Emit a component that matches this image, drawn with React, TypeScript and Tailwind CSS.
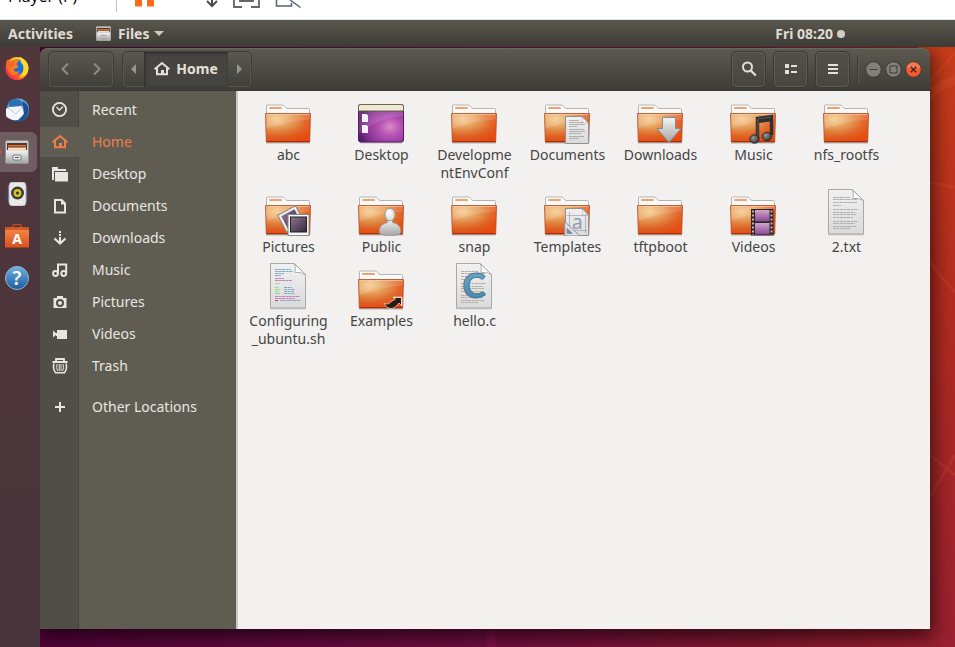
import { useState, type ReactNode } from 'react';

type Kind =
    | 'folder'
    | 'desktop'
    | 'documents'
    | 'downloads'
    | 'music'
    | 'pictures'
    | 'public'
    | 'templates'
    | 'videos'
    | 'link'
    | 'text'
    | 'script'
    | 'csource';

interface FileItem {
    name: string;
    kind: Kind;
}

// a line break marks where a long name wraps
const files: FileItem[] = [
    { name: 'abc', kind: 'folder' },
    { name: 'Desktop', kind: 'desktop' },
    { name: 'Developme\nntEnvConf', kind: 'folder' },
    { name: 'Documents', kind: 'documents' },
    { name: 'Downloads', kind: 'downloads' },
    { name: 'Music', kind: 'music' },
    { name: 'nfs_rootfs', kind: 'folder' },
    { name: 'Pictures', kind: 'pictures' },
    { name: 'Public', kind: 'public' },
    { name: 'snap', kind: 'folder' },
    { name: 'Templates', kind: 'templates' },
    { name: 'tftpboot', kind: 'folder' },
    { name: 'Videos', kind: 'videos' },
    { name: '2.txt', kind: 'text' },
    { name: 'Configuring\n_ubuntu.sh', kind: 'script' },
    { name: 'Examples', kind: 'link' },
    { name: 'hello.c', kind: 'csource' },
];

const places: { name: string; icon: ReactNode }[] = [
    {
        name: 'Recent',
        icon: (
            <g fill="none" stroke="currentColor">
                <circle cx="7.500" cy="7.500" r="6.600" strokeWidth="1.800" />
                <path d="M4.500 5l3 3L11 4.500" strokeWidth="1.300" />
            </g>
        ),
    },
    {
        name: 'Home',
        icon: (
            <>
                <path
                    d="M.6 8.200L8 2l7.400 6.200M3 7v6.200h10V7"
                    fill="none"
                    stroke="currentColor"
                    strokeWidth="2"
                />
                <path d="M7 9h3v5H7z" fill="currentColor" />
            </>
        ),
    },
    {
        name: 'Desktop',
        icon: (
            <path
                d="M0 1h6v2h8v2H2v9H0zM3 6h13v9.500H3z"
                fill="currentColor"
            />
        ),
    },
    {
        name: 'Documents',
        icon: (
            <path
                d="M2 1h8l4 4v10.500H2zM4 3v10.500h8V6.500H9V3z"
                fill="currentColor"
                fillRule="evenodd"
            />
        ),
    },
    {
        name: 'Downloads',
        icon: (
            <>
                <path d="M7 1h2v2H7zM7 4h2v2H7zM7 7h2v6H7z" fill="currentColor" />
                <path
                    d="M2.500 8.500L8 13.500l5.500-5"
                    fill="none"
                    stroke="currentColor"
                    strokeWidth="2.200"
                />
            </>
        ),
    },
    {
        name: 'Music',
        icon: (
            <g fill="none" stroke="currentColor" strokeWidth="2">
                <circle cx="3.500" cy="11.500" r="2.400" />
                <circle cx="11.700" cy="11.500" r="2.400" />
                <path d="M6 11.500V2.500h8.200v9" />
            </g>
        ),
    },
    {
        name: 'Pictures',
        icon: (
            <path
                d="M5 2h6v2h3.500v10h-13V4H5zM8 5a4 4 0 100 8 4 4 0 000-8zM8 7a2 2 0 110 4 2 2 0 010-4z"
                fill="currentColor"
                fillRule="evenodd"
            />
        ),
    },
    {
        name: 'Videos',
        icon: (
            <path
                d="M1 4.500l4 3.500-4 3.500zM5 4h10v9H5zM4 7h2v3H4z"
                fill="currentColor"
            />
        ),
    },
    {
        name: 'Trash',
        icon: (
            <g fill="none" stroke="currentColor">
                <path d="M.5 4h15M4 3V1h8v2" strokeWidth="1.800" />
                <path
                    d="M2 5.500Q.5 11 3.500 14.800h9Q15.500 11 14 5.500"
                    strokeWidth="1.600"
                />
                <path d="M5 6q-.8 4 .5 7M7.200 6v7M9 6v7M11.200 6q.8 4-.5 7" />
            </g>
        ),
    },
    {
        name: 'Other Locations',
        icon: (
            <path
                d="M8 3v10M3 8h10"
                fill="none"
                stroke="currentColor"
                strokeWidth="2"
            />
        ),
    },
];

const Gradients = () => (
    <svg width="0" height="0" className="absolute" aria-hidden="true">
        <defs>
            <radialGradient id="folderFill" cx=".25" cy=".2" r=".88">
                <stop offset="0" stopColor="#f5cc90" />
                <stop offset=".4" stopColor="#e69a56" />
                <stop offset=".75" stopColor="#e2672a" />
                <stop offset="1" stopColor="#f04c12" />
            </radialGradient>
            <linearGradient id="folderLow" x2="0" y2="1">
                <stop offset=".4" stopColor="#c85a14" stopOpacity="0" />
                <stop offset="1" stopColor="#dc440c" stopOpacity=".5" />
            </linearGradient>
            <linearGradient id="paper" x2="0" y2="1">
                <stop offset="0" stopColor="#f1f1f1" />
                <stop offset="1" stopColor="#dadada" />
            </linearGradient>
            <linearGradient id="metal" x2="0" y2="1">
                <stop offset="0" stopColor="#f4f4f4" />
                <stop offset="1" stopColor="#a4a4a4" />
            </linearGradient>
            <radialGradient id="deskFill" cx=".7" cy=".6" r=".7">
                <stop offset="0" stopColor="#d98ac8" />
                <stop offset=".35" stopColor="#b650b4" />
                <stop offset=".75" stopColor="#8a3496" />
                <stop offset="1" stopColor="#57206e" />
            </radialGradient>
            <linearGradient id="photo" x2="1" y2="1">
                <stop offset="0" stopColor="#8d7590" />
                <stop offset="1" stopColor="#352b3c" />
            </linearGradient>
            <linearGradient id="film" x2="0" y2="1">
                <stop offset="0" stopColor="#cfa6cf" />
                <stop offset="1" stopColor="#8a4690" />
            </linearGradient>
            <linearGradient id="cBlue" x2="0" y2="1">
                <stop offset="0" stopColor="#76aecb" />
                <stop offset="1" stopColor="#4580a5" />
            </linearGradient>
            <radialGradient id="note" cx=".35" cy=".35" r=".7">
                <stop offset="0" stopColor="#9a9a9a" />
                <stop offset="1" stopColor="#333" />
            </radialGradient>
            <linearGradient id="foxRing" x1="1" x2="0" y2="1">
                <stop offset="0" stopColor="#fff14a" />
                <stop offset=".4" stopColor="#ffb01c" />
                <stop offset=".7" stopColor="#ff4a2c" />
                <stop offset="1" stopColor="#e4127a" />
            </linearGradient>
            <linearGradient id="blueBall" x2="0" y2="1">
                <stop offset="0" stopColor="#6fb0e0" />
                <stop offset="1" stopColor="#1d5a9c" />
            </linearGradient>
            <linearGradient id="bag" x2="0" y2="1">
                <stop offset="0" stopColor="#f58a4a" />
                <stop offset="1" stopColor="#dc4f1c" />
            </linearGradient>
        </defs>
    </svg>
);

const Folder = () => (
    <>
        <path d="M2 46.800h44" stroke="#000" strokeOpacity=".25" strokeWidth="1.500" />
        <path
            d="M2.500 19V10q0-1 1-1H18q1.500 0 2.500 1.500T23 12.500h21.500q1 0 1 1V19z"
            fill="#fafafa"
            stroke="#b4b4b4"
        />
        <rect x="5" y="11" width="13" height="2" rx="1" fill="#eda272" />
        <path
            d="M1.500 17.500h45l-.8 28.500H2.300z"
            fill="url(#folderFill)"
        />
        <path d="M1.500 17.500h45l-.8 28.500H2.300z" fill="url(#folderLow)" />
        <path d="M2 18h44l-.2 5.500Q22 25 2.400 33z" fill="#fff" fillOpacity=".14" />
        <path
            d="M1.500 17.500h45l-.8 28.500H2.300z"
            fill="none"
            stroke="#b5502a"
            strokeOpacity=".85"
        />
        <path d="M2.500 18.500h43" stroke="#fbd3ac" strokeOpacity=".6" />
        <path d="M2.800 45.500h42.500" stroke="#a92e08" />
    </>
);

const MiniPaper = () => (
    <>
        <path
            d="M22.500 20.500h17l6 6.500v20.500h-23z"
            fill="url(#paper)"
            stroke="#909090"
        />
        <path d="M39 21l6 6.500q-4-1.500-5.500-1 .5-3-.5-5.500z" fill="#fff" stroke="#aaa" strokeWidth=".6" />
    </>
);

const Paper = () => (
    <>
        <path d="M6 46.800h36" stroke="#000" strokeOpacity=".2" />
        <path
            d="M6.500 1.500h24l11 11v33.500h-35z"
            fill="url(#paper)"
            stroke="#a8a8a8"
        />
        <path d="M30.500 2q1.500 4 .5 8.500 5-1 10.500 2z" fill="#fff" stroke="#a0a0a0" strokeWidth=".8" />
    </>
);

const GreyLines = () => (
    <path
        d="M11 9.500h17M11 11.500h24M11 14.500h24M11 17.500h8M11 21.500h25M11 24.500h22M11 26.500h23M11 29.500h20M11 33.500h25M11 35.500h22M11 38.500h23M11 40.500h17"
        stroke="#b0b0b0"
        strokeDasharray="3 .5"
    />
);

const emblems: Partial<Record<Kind, ReactNode>> = {
    documents: (
        <>
            <MiniPaper />
            <path
                d="M26 24.500h10M26 26.500h15M26 28.500h16M26 30.500h8M26 33.500h15M26 35.500h16M26 37.500h12M26 40.500h15M26 42.500h10"
                stroke="#a8a8a8"
                strokeWidth=".9"
            />
        </>
    ),
    downloads: (
        <path
            d="M26.500 21.500h13v11h5.500L33 46.500 21 32.500h5.500z"
            fill="url(#metal)"
            stroke="#8a8a8a"
        />
    ),
    music: (
        <>
            <path
                d="M28.500 42V22.500l14-2V39M28.500 25.500l14-2"
                fill="none"
                stroke="#303030"
                strokeWidth="3.400"
            />
            <path d="M28.800 40V23l13.500-2" fill="none" stroke="#6a6a6a" strokeWidth=".7" />
            <ellipse cx="25.500" cy="43" rx="4.600" ry="4.200" fill="url(#note)" stroke="#2a2a2a" />
            <ellipse cx="38" cy="40.500" rx="4.600" ry="4.200" fill="url(#note)" stroke="#2a2a2a" />
        </>
    ),
    pictures: (
        <>
            <g transform="rotate(-28 26 31)">
                <rect x="17" y="22" width="20" height="19" fill="#f4f4f4" stroke="#888" />
                <rect x="19.500" y="24.500" width="15" height="14" fill="url(#photo)" />
            </g>
            <rect x="24" y="26.500" width="21" height="21" fill="#f7f7f7" stroke="#888" />
            <rect x="26.500" y="29" width="16" height="15" fill="url(#photo)" stroke="#222" />
        </>
    ),
    public: (
        <>
            <path
                d="M30.500 31v3.500q-7 1.500-8 6.500v4q3 2.700 10.500 2.700t10.500-2.700v-4q-1-5-8-6.500V31z"
                fill="url(#metal)"
                stroke="#9c9c9c"
            />
            <ellipse cx="33" cy="26.500" rx="5" ry="6.200" fill="#e4e4e4" stroke="#9c9c9c" />
            <ellipse cx="32" cy="25" rx="3" ry="3.500" fill="#f6f6f6" />
        </>
    ),
    templates: (
        <>
            <MiniPaper />
            <path d="M26.500 24v21M42.500 26v19M24 27.500h20M24 42.500h20" stroke="#a5a9b6" strokeWidth=".8" />
            <text x="29" y="40.500" fontSize="19" fill="#9298b0">
                a
            </text>
            <path d="M21.500 33.500v14.500h15.500z" fill="#dfe3ec" fillOpacity=".8" stroke="#8b8f9e" />
            <path d="M24 40.500v5h5.500z" fill="#7f8394" stroke="#8b8f9e" />
        </>
    ),
    videos: (
        <>
            <rect x="22" y="21" width="22.500" height="26.500" fill="#2b2428" />
            <rect x="26" y="22" width="14.500" height="11.500" fill="url(#film)" />
            <rect x="26" y="35" width="14.500" height="11.500" fill="url(#film)" />
            <path
                d="M24 22.500V47M42.500 22.500V47"
                stroke="#d8b0a0"
                strokeWidth="2"
                strokeDasharray="2 2"
            />
        </>
    ),
    link: (
        <>
            <path
                d="M36 35h9v9l-3-3q-4 6-9 5.500-4-.5-6-5 5 1.500 6.500-1.500L38.500 37z"
                fill="#2a1c14"
                stroke="#f6cdb5"
                strokeWidth=".8"
            />
            <path d="M36 35.500h8.500v8.500" fill="none" stroke="#fff" strokeWidth=".8" />
        </>
    ),
};

const FileIcon = ({ kind }: { kind: Kind }) => {
    if (kind === 'desktop') {
        return (
            <>
                <path d="M3 46.800h42" stroke="#000" strokeOpacity=".3" />
                <rect x="1.500" y="8.500" width="45" height="37.500" rx="2" fill="url(#deskFill)" stroke="#571a62" />
                <path d="M2 35V16h44v4Q20 22 2 38z" fill="#fff" fillOpacity=".12" />
                <path d="M1.500 15V10.500q0-2 2-2h41q2 0 2 2V15z" fill="#ecead6" stroke="#6d6a3c" />
                <path d="M5 18h4.500l1.500 1.500v6.500H5zM5 29h4.500l1.500 1.500V37H5z" fill="#f6f1f6" />
            </>
        );
    }
    if (kind === 'text') {
        return (
            <>
                <Paper />
                <GreyLines />
            </>
        );
    }
    if (kind === 'script') {
        return (
            <>
                <Paper />
                <g strokeDasharray="3 .5">
                    <path
                        d="M11 7.500h16M11 9.500h18M11 11.500h9M11 13.500h6M20 25.500h8M20 27.500h11M20 29.500h10M20 31.500h11"
                        stroke="#7fabc6"
                    />
                    <path d="M11 16.500h9M11 18.500h17M11 34.500h25M11 36.500h20" stroke="#c284b8" />
                    <path d="M11 21.500h5M11 25.500h4M11 27.500h5M11 29.500h4M11 31.500h5" stroke="#8fdc7e" />
                    <path d="M11 38.500h3" stroke="#d8404a" />
                    <path d="M16 38.500h20" stroke="#86a4bc" />
                </g>
            </>
        );
    }
    if (kind === 'csource') {
        return (
            <>
                <Paper />
                <GreyLines />
                <text
                    x="24"
                    y="36"
                    textAnchor="middle"
                    fontSize="35"
                    fontFamily="Lato, sans-serif"
                    className="font-black"
                    fill="url(#cBlue)"
                    stroke="#3d6f8f"
                    strokeWidth=".8"
                >
                    C
                </text>
            </>
        );
    }
    return (
        <>
            <Folder />
            {emblems[kind]}
        </>
    );
};

const dockApps: { name: string; icon: ReactNode }[] = [
    {
        name: 'Firefox',
        icon: (
            <>
                <circle cx="12" cy="12.500" r="11.500" fill="url(#foxRing)" />
                <circle cx="12" cy="11" r="7.500" fill="#1b6fd8" />
                <path d="M8 5q3-2 6-1-1 3-3 4 3 1 1.500 4-3 0-4 2 2 3 6 1-2 5-7 4-5-2-4-8z" fill="#ff7a1c" />
                <path d="M1 8q0-3 2-5 1 2 3 3l3-1v5q-4 1-4 4-4-2-4-6z" fill="#f7642e" />
                <path d="M15 1q8 4 8.500 11Q22 21 14 22q6-6 4-13-3-3-3-8z" fill="#ffd92e" />
            </>
        ),
    },
    {
        name: 'Thunderbird',
        icon: (
            <>
                <circle cx="13" cy="12" r="11.500" fill="url(#blueBall)" />
                <path d="M3 4Q8-1 15 2q4 4 2 8L5 9z" fill="#2c6fb5" />
                <path d="M1 11l3-2 13-1 2 8-6 6q-8 1-12-4z" fill="#f4f6fa" />
                <path d="M3 10l8 6 6-7" fill="none" stroke="#c3cad6" />
                <path d="M17 3q8 4 6 12-3 7-9 8 6-6 5-11z" fill="#1d4f94" />
            </>
        ),
    },
    {
        name: 'Files',
        icon: (
            <>
                <rect x=".5" y=".5" width="23" height="23" rx="1.500" fill="#cfcfcf" stroke="#8f8f8f" />
                <path d="M2 3h20v7H2z" fill="#4a3a30" />
                <path d="M3 5h18v1.500H3z" fill="#e8702c" />
                <path d="M3 7.500h18V10H3z" fill="#fbd9b4" />
                <rect x="1" y="10.500" width="22" height="12.500" fill="url(#metal)" />
                <rect x="8" y="15" width="8" height="5" rx="1" fill="#eee" stroke="#777" />
                <path d="M10 17.500h4" stroke="#555" />
            </>
        ),
    },
    {
        name: 'Rhythmbox',
        icon: (
            <>
                <circle cx="12" cy="12" r="12" fill="#3d4a80" fillOpacity=".35" />
                <rect x="4" y="0" width="17" height="24" rx="4" fill="#e9e9e7" stroke="#b9b9b9" />
                <circle cx="12.500" cy="11" r="6.500" fill="#3a3a36" />
                <circle cx="12.500" cy="11" r="4" fill="#d9bd2a" />
                <circle cx="12.500" cy="11" r="1.600" fill="#3a3a36" />
                <circle cx="16" cy="20" r="1.800" fill="#fff" stroke="#ccc" strokeWidth=".6" />
            </>
        ),
    },
    {
        name: 'Ubuntu Software',
        icon: (
            <>
                <path d="M8 4V2q0-1.500 1.500-1.500h5Q16 .5 16 2v2" fill="none" stroke="#c9421a" strokeWidth="1.500" />
                <path d="M0 3.500h24v20H0z" fill="url(#bag)" />
                <path d="M0 3.500h24v2.500H0z" fill="#d85722" />
                <text x="12" y="19.500" textAnchor="middle" fontSize="14" className="font-bold" fill="#fff">
                    A
                </text>
            </>
        ),
    },
    {
        name: 'Help',
        icon: (
            <>
                <circle cx="12" cy="12" r="11.500" fill="url(#blueBall)" stroke="#8fb4d6" />
                <text x="12" y="18.500" textAnchor="middle" fontSize="19" className="font-semibold" fill="#fff">
                    ?
                </text>
            </>
        ),
    },
];

const ViewerToolbar = () => (
    <div className="flex h-5 items-start overflow-hidden border-b border-[#dfe5df] bg-white">
        <p className="-mt-3 w-[116px] pl-2 font-['Open_Sans',sans-serif] text-base leading-4 text-black">
            Player (P)
        </p>
        <svg width="190" height="12" viewBox="0 0 190 12" aria-hidden="true">
            <path d="M.5 0v12" stroke="#c4c4c4" />
            <path d="M19 0h7v6.500h-7zM31 0h7v6.500h-7z" fill="#ff6a1c" />
            <path d="M96 0v6M91 1l5 5 5-5" fill="none" stroke="#4a4a4a" strokeWidth="2" />
            <path
                d="M118 0v7h8M135 7h8V0M124 0v1h13V0"
                fill="none"
                stroke="#666"
                strokeWidth="1.800"
            />
            <path d="M160.500 0v6h15V3M174 0l10.500 7.500" fill="none" stroke="#566270" strokeWidth="1.500" />
        </svg>
    </div>
);

const TopBar = () => (
    <div className="flex h-[27px] items-center bg-linear-to-b from-[#5a574e] to-[#3d3b36] text-sm font-bold text-[#dfdbd2]">
        <button className="pl-2">Activities</button>
        <button className="ml-[23px] flex items-center">
            <svg width="15" height="15" viewBox="0 0 24 24" className="mr-[7px]" aria-hidden="true">
                {dockApps[2].icon}
            </svg>
            Files
            <svg width="10" height="5" viewBox="0 0 10 5" className="ml-[5px]" aria-hidden="true">
                <path d="M0 0h10L5 5z" fill="#cfccc4" />
            </svg>
        </button>
        <div className="mr-[110px] ml-auto flex items-center gap-1">
            <time>Fri 08:20</time>
            <span className="size-2 rounded-full bg-[#cfccc4]" />
        </div>
    </div>
);

const toolButton =
    'flex h-[37px] w-[35px] items-center justify-center rounded-[5px] border border-[#3a3934] bg-linear-to-b from-[#545149] to-[#47453f] shadow-[inset_0_0_0_1px_#5e5b53]';

const HeaderBar = () => (
    <header className="flex h-[43px] items-center rounded-t-lg border-b border-[#3a3733] bg-linear-to-b from-[#5c5a51] to-[#3f3d38] px-2 text-[#e4e0d8] shadow-[inset_0_1px_0_#6a675e]">
        <div className="flex h-[37px] w-[66px] rounded-[5px] border border-[#403e38] shadow-[inset_0_0_0_1px_#58564e]">
            <button aria-label="Back" className="flex flex-1 items-center justify-center">
                <svg width="8" height="12" viewBox="0 0 8 12" fill="none" stroke="#8f8c84" strokeWidth="2">
                    <path d="M7 .5L1.500 6 7 11.500" />
                </svg>
            </button>
            <button aria-label="Forward" className="flex flex-1 items-center justify-center">
                <svg width="8" height="12" viewBox="0 0 8 12" fill="none" stroke="#8f8c84" strokeWidth="2">
                    <path d="M1 .5L6.500 6 1 11.500" />
                </svg>
            </button>
        </div>
        <div className="ml-2 flex h-[37px] rounded-[5px] border border-[#403e38] shadow-[inset_0_0_0_1px_#58564e]">
            <button aria-label="Scroll path left" className="flex w-[21px] items-center justify-center">
                <svg width="5" height="10" viewBox="0 0 5 10">
                    <path d="M5 0v10L0 5z" fill="#98958d" />
                </svg>
            </button>
            <button className="flex w-[84px] items-center justify-center gap-[6px] bg-[#454440] text-sm font-bold shadow-[inset_1px_1px_3px_#2b2a27]">
                <svg width="16" height="16" viewBox="0 0 16 16" aria-hidden="true">
                    {places[1].icon}
                </svg>
                Home
            </button>
            <button aria-label="Scroll path right" className="flex w-[23px] items-center justify-center">
                <svg width="5" height="10" viewBox="0 0 5 10">
                    <path d="M0 0v10l5-5z" fill="#98958d" />
                </svg>
            </button>
        </div>
        <div className="ml-auto flex gap-[7px]">
            <button aria-label="Search" className={toolButton}>
                <svg width="16" height="16" viewBox="0 0 16 16" fill="none" stroke="currentColor">
                    <circle cx="6.500" cy="6" r="4.500" strokeWidth="2" />
                    <path d="M9.800 9.500l5 5" strokeWidth="2.400" />
                </svg>
            </button>
            <button aria-label="List view" className={toolButton}>
                <svg width="14" height="12" viewBox="0 0 14 12" fill="currentColor">
                    <path d="M1 1h4v4H1zM7 2h6v2H7zM1 7h4v4H1zM7 8h6v2H7z" />
                </svg>
            </button>
            <button aria-label="Menu" className={toolButton}>
                <svg width="12" height="12" viewBox="0 0 12 12" fill="currentColor">
                    <path d="M1 1h10v2H1zM1 5h10v2H1zM1 9h10v2H1z" />
                </svg>
            </button>
        </div>
        <div className="ml-[7px] h-[29px] w-[2px] border-x border-l-[#3f3d38] border-r-[#5a574f]" />
        <div className="ml-[6px] flex gap-[3px]">
            <button aria-label="Minimize">
                <svg width="17" height="17" viewBox="0 0 17 17">
                    <circle cx="8.500" cy="8.500" r="7.800" fill="#82807a" stroke="#383631" />
                    <path d="M4.500 8.500h8" stroke="#3c3a35" />
                </svg>
            </button>
            <button aria-label="Maximize">
                <svg width="17" height="17" viewBox="0 0 17 17">
                    <circle cx="8.500" cy="8.500" r="7.800" fill="#82807a" stroke="#383631" />
                    <path d="M5 5h7v7H5z" fill="none" stroke="#3c3a35" />
                </svg>
            </button>
            <button aria-label="Close">
                <svg width="17" height="17" viewBox="0 0 17 17">
                    <circle cx="8.500" cy="8.500" r="7.800" fill="#ec5f32" stroke="#5e2c1a" />
                    <path d="M1.500 7a7 6 0 0114 0z" fill="#fff" fillOpacity=".18" />
                    <path d="M5.800 5.800l5.400 5.400M11.200 5.800l-5.400 5.400" stroke="#4a2417" strokeWidth="1.400" />
                </svg>
            </button>
        </div>
    </header>
);

const Sidebar = () => {
    const [active, setActive] = useState('Home');

    return (
        <nav className="w-[198px] shrink-0 border-r-2 border-[#c9c7c3] bg-[linear-gradient(to_right,#4f4f47_38px,#44433c_38px,#44433c_39px,#5f5d51_39px)] pt-[3px] text-sm text-[#e8e6e3]">
            <ul>
                {places.map((place) => (
                    <li key={place.name} className="last:mt-[9px]">
                        <button
                            aria-current={place.name === active}
                            className="flex h-8 w-full items-center text-left aria-[current=true]:text-[#f07c4c]"
                            onClick={() => {
                                setActive(place.name);
                            }}
                        >
                            <span
                                className={`flex h-[30px] w-[39px] items-center pl-3 ${
                                    place.name === active ? 'bg-[#5f5d51]' : ''
                                }`}
                            >
                                <svg width="16" height="16" viewBox="0 0 16 16" aria-hidden="true">
                                    {place.icon}
                                </svg>
                            </span>
                            <span className="pl-[13px]">{place.name}</span>
                        </button>
                    </li>
                ))}
            </ul>
        </nav>
    );
};

const FileGrid = () => (
    <main className="min-w-0 flex-1 bg-[#f2f1f0] px-1 pt-[5px]">
        <ul className="grid grid-cols-[repeat(auto-fill,93px)] content-start">
            {files.map((file) => (
                <li key={file.name} className="pb-[6px]">
                    <button className="flex w-full flex-col items-center text-sm leading-[18px] text-[#454543]">
                        <svg width="48" height="48" viewBox="0 0 48 48" className="mr-px" aria-hidden="true">
                            <FileIcon kind={file.kind} />
                        </svg>
                        <span className="pt-[2px] whitespace-pre">{file.name}</span>
                    </button>
                </li>
            ))}
        </ul>
    </main>
);

const Dock = () => (
    <nav className="relative z-10 w-10 shrink-0 bg-linear-to-b from-[#51363c] to-[#46343a] pt-px">
        <ul className="flex flex-col gap-[2px]">
            {dockApps.map((app) => (
                <li key={app.name}>
                    <button
                        aria-label={app.name}
                        className={`flex h-10 w-[37px] items-center rounded-r-md pl-[5px] ${
                            app.name === 'Files'
                                ? 'bg-[#705d62] bg-[radial-gradient(circle_at_0_50%,#e0522a_1px,transparent_2px)]'
                                : ''
                        }`}
                    >
                        <svg width="24" height="24" viewBox="0 0 24 24">
                            {app.icon}
                        </svg>
                    </button>
                </li>
            ))}
        </ul>
    </nav>
);

export default function App() {
    return (
        <div className="flex min-h-screen flex-col font-['Noto_Sans','Open_Sans',sans-serif]">
            <Gradients />
            <ViewerToolbar />
            <TopBar />
            <div className="relative flex flex-1 overflow-hidden bg-[#720e40]">
                <svg
                    className="absolute inset-0 size-full"
                    viewBox="0 0 955 600"
                    preserveAspectRatio="none"
                    aria-hidden="true"
                >
                    <defs>
                        <linearGradient id="wallX">
                            <stop offset=".05" stopColor="#55033a" />
                            <stop offset=".5" stopColor="#720e40" />
                            <stop offset=".8" stopColor="#861831" />
                            <stop offset="1" stopColor="#a3202d" />
                        </linearGradient>
                        <linearGradient id="wallY" x2="0" y2="1">
                            <stop offset="0" stopColor="#c83c1a" />
                            <stop offset=".4" stopColor="#b52c20" />
                            <stop offset="1" stopColor="#9a2030" />
                        </linearGradient>
                    </defs>
                    <path d="M0 0h955v600H0z" fill="url(#wallX)" />
                    <path d="M918 0h37v600h-37z" fill="url(#wallY)" />
                    <g fill="none" stroke="#f07a4a" strokeOpacity=".14">
                        <path d="M925 52q15-14 32-20" strokeWidth="9" />
                        <path d="M925 135l30 5M925 205q10 20 30 40M925 404l30 24M925 458l30-50" strokeWidth="3" />
                        <path d="M925 40l30-34" strokeWidth="2" />
                    </g>
                    <path d="M484 570l8 0 5 30h-10z" fill="#8a1450" fillOpacity=".6" />
                </svg>
                <Dock />
                <section className="relative mt-px mr-[25px] mb-[18px] flex min-w-0 flex-1 flex-col rounded-t-lg shadow-[0_5px_20px_3px_rgba(0,0,0,0.65)]">
                    <HeaderBar />
                    <div className="flex flex-1">
                        <Sidebar />
                        <FileGrid />
                    </div>
                </section>
            </div>
        </div>
    );
}
